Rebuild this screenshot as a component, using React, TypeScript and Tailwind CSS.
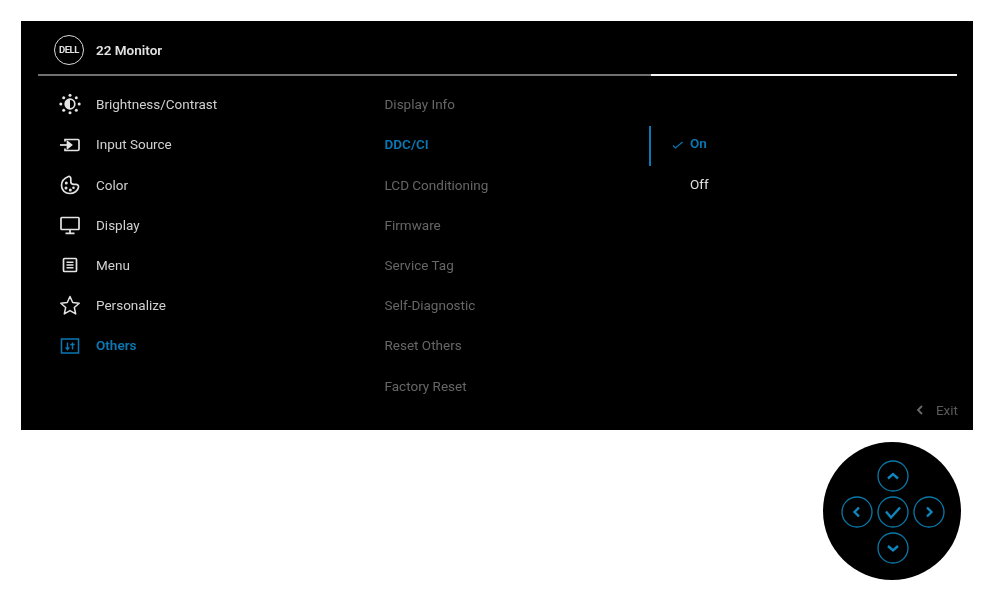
import React from "react";

const white = "#e4e4e4";
const blue = "#0a78b4";

function Bright() {
  return (
    <svg width="24" height="24" viewBox="0 0 24 24" fill="none">
      <circle cx="12" cy="12" r="4.800" stroke={white} strokeWidth="1.700" />
      <path d="M12 7.200a4.800 4.800 0 0 1 0 9.600z" fill={white} transform="matrix(-1 0 0 1 24 0)" />
      {[[12, 3.200], [12, 20.800], [2.800, 12], [21.200, 12], [5.700, 5.700], [18.300, 5.700], [5.700, 18.300], [18.300, 18.300]].map(([x, y], i) => (
        <circle key={i} cx={x} cy={y} r="1.500" fill={white} />
      ))}
    </svg>
  );
}
function Input() {
  return (
    <svg width="24" height="24" viewBox="0 0 24 24" fill="none" stroke={white} strokeWidth="1.700">
      <path d="M7 8.500V6.500h12.700a1.300 1.300 0 0 1 1.300 1.300v8.400a1.300 1.300 0 0 1-1.300 1.300H7v-2" />
      <path d="M2 12h10" />
      <path d="M13.500 12l-4-3.300v6.600z" fill={white} />
    </svg>
  );
}
function Palette() {
  return (
    <svg width="24" height="24" viewBox="0 0 24 24" fill="none" stroke={white} strokeWidth="1.700">
      <path d="M10.500 3.500C7 4.800 3.500 8 3.500 12.500c0 4.700 3.800 8 8.300 8 4.200 0 8.200-2.700 8.700-6.400.2-1.600-1-2.800-2.500-2.800h-2.300c-1.700 0-2.900-1-2.900-2.600V5.600c0-1.500-1.200-2.700-2.300-2.100z" />
      <circle cx="8.300" cy="10" r="1.500" fill={white} stroke="none" />
      <circle cx="8" cy="15" r="1.500" fill={white} stroke="none" />
      <circle cx="12.300" cy="17" r="1.500" fill={white} stroke="none" />
      <circle cx="15.500" cy="14.800" r="1.300" fill={white} stroke="none" />
    </svg>
  );
}
function Monitor() {
  return (
    <svg width="24" height="24" viewBox="0 0 24 24" fill="none" stroke={white} strokeWidth="1.700">
      <rect x="3" y="4.500" width="18" height="12" rx="0.800" />
      <path d="M12 16.500v3.500M7.500 20.300h9" />
    </svg>
  );
}
function MenuIcon() {
  return (
    <svg width="24" height="24" viewBox="0 0 24 24" fill="none" stroke={white} strokeWidth="1.700">
      <rect x="5.500" y="5.500" width="13" height="13" rx="1" />
      <path d="M8.500 9.300h7M8.500 12h7M8.500 14.700h7" strokeWidth="1.400" />
    </svg>
  );
}
function Star() {
  return (
    <svg width="24" height="24" viewBox="0 0 24 24" fill="none" stroke={white} strokeWidth="1.500" strokeLinejoin="round">
      <path d="M12 3.500l2.700 6 6.500.7-4.900 4.300 1.400 6.400L12 17.600l-5.700 3.300 1.400-6.400-4.900-4.300 6.500-.7z" />
    </svg>
  );
}
function Others() {
  return (
    <svg width="24" height="24" viewBox="0 0 24 24" fill="none" stroke={blue} strokeWidth="1.500">
      <rect x="3.500" y="5" width="17" height="14" />
      <path d="M9.500 8.500v7M7.700 13.300l1.800 2.400 1.800-2.400" strokeWidth="1.400" />
      <path d="M14.500 15.500v-7M12.300 10.500h4.400" strokeWidth="1.400" />
    </svg>
  );
}

function DellLogo() {
  return (
    <div className="flex h-[30px] w-[30px] items-center justify-center rounded-full border-[1.5px] border-[#d9d9d9]">
      <span className="text-[9.5px] font-bold tracking-[-0.4px] text-[#e0e0e0]">DELL</span>
    </div>
  );
}

function Joystick() {
  const ring = "#0a78a8";
  const circles: [number, number][] = [[70, 34], [34, 70], [70, 70], [106, 70], [70, 106]];
  return (
    <svg width="138" height="138" viewBox="0 0 138 138" fill="none" className="block">
      <circle cx="69" cy="69" r="69" fill="#000" />
      {circles.map(([x, y], i) => (
        <circle key={i} cx={x} cy={y} r="15" stroke={ring} strokeWidth="1.300" />
      ))}
      <g stroke="#0f86bd" strokeWidth="2.400" strokeLinejoin="miter">
        <path d="M65 36.500l5-4.500 5 4.500" />
        <path d="M36 65.500l-4.500 4.500 4.500 4.500" />
        <path d="M63 69.500l5 6 9-10" />
        <path d="M104 65.500l4.500 4.500-4.500 4.500" />
        <path d="M65 104l5 4.500 5-4.500" />
      </g>
    </svg>
  );
}

const left: [string, React.ReactNode, boolean][] = [
  ["Brightness/Contrast", <Bright />, false],
  ["Input Source", <Input />, false],
  ["Color", <Palette />, false],
  ["Display", <Monitor />, false],
  ["Menu", <MenuIcon />, false],
  ["Personalize", <Star />, false],
  ["Others", <Others />, true],
];

const middle = [
  "Display Info",
  "DDC/CI",
  "LCD Conditioning",
  "Firmware",
  "Service Tag",
  "Self-Diagnostic",
  "Reset Others",
  "Factory Reset",
];

export default function App() {
  return (
    <div className="h-[601px] w-[986px] overflow-hidden bg-white pl-[21px] pt-[21px] font-['Roboto',sans-serif] text-[13.5px] blur-[0.5px]">
      <div className="flex h-[409px] w-[952px] flex-col bg-black">
        <div className="flex h-[53px] items-center gap-[12px] pl-[33px] pt-[5px]">
          <DellLogo />
          <span className="font-semibold text-[#e2e2e2]">22 Monitor</span>
        </div>
        <div className="ml-[17px] mr-[16px] flex h-[2px]">
          <div className="w-[613px] bg-[#707070]" />
          <div className="flex-1 bg-[#f4f4f4]" />
        </div>
        <div className="flex flex-1 pt-[8.300px]">
          <div className="w-[363.500px] pl-[37px]">
            {left.map(([label, icon, active]) => (
              <div key={label} className="flex h-[40.200px] items-center gap-[14px]">
                <span className="flex w-[24px] justify-center">{icon}</span>
                <span className={active ? "font-semibold text-[#0a78b4]" : "text-[#d0d0d0]"}>{label}</span>
              </div>
            ))}
          </div>
          <div className="w-[264.500px]">
            {middle.map((label) => (
              <div
                key={label}
                className={
                  "flex h-[40.200px] items-center " +
                  (label === "DDC/CI" ? "font-semibold text-[#0a78b4]" : "text-[#666666]")
                }
              >
                {label}
              </div>
            ))}
          </div>
          <div className="flex-1 pt-[42px]">
            <div className="flex h-[40px] items-center border-l-[2.500px] border-[#0a78b4] pb-[6px]">
              <svg width="12" height="8" viewBox="0 0 12 8" fill="none" className="ml-[20.500px] mt-[3px]" stroke="#0a78b4" strokeWidth="1.200">
                <path d="M1 4.500l2.500 2.500 7-6" />
              </svg>
              <span className="ml-[6.500px] font-semibold text-[#0a78b4]">On</span>
            </div>
            <div className="flex h-[35px] items-center pl-[41px] text-[#e0e0e0]">Off</div>
          </div>
        </div>
        <div className="flex h-0 -translate-y-[20px] items-center justify-end gap-[12px] pr-[15px] text-[#5a5a5a]">
          <svg width="8" height="10" viewBox="0 0 8 10" fill="none" stroke="#6a6a6a" strokeWidth="1.800">
            <path d="M6 1L2 5l4 4" />
          </svg>
          <span>Exit</span>
        </div>
      </div>
      <div className="flex w-[940px] justify-end pt-[12px]">
        <Joystick />
      </div>
    </div>
  );
}
